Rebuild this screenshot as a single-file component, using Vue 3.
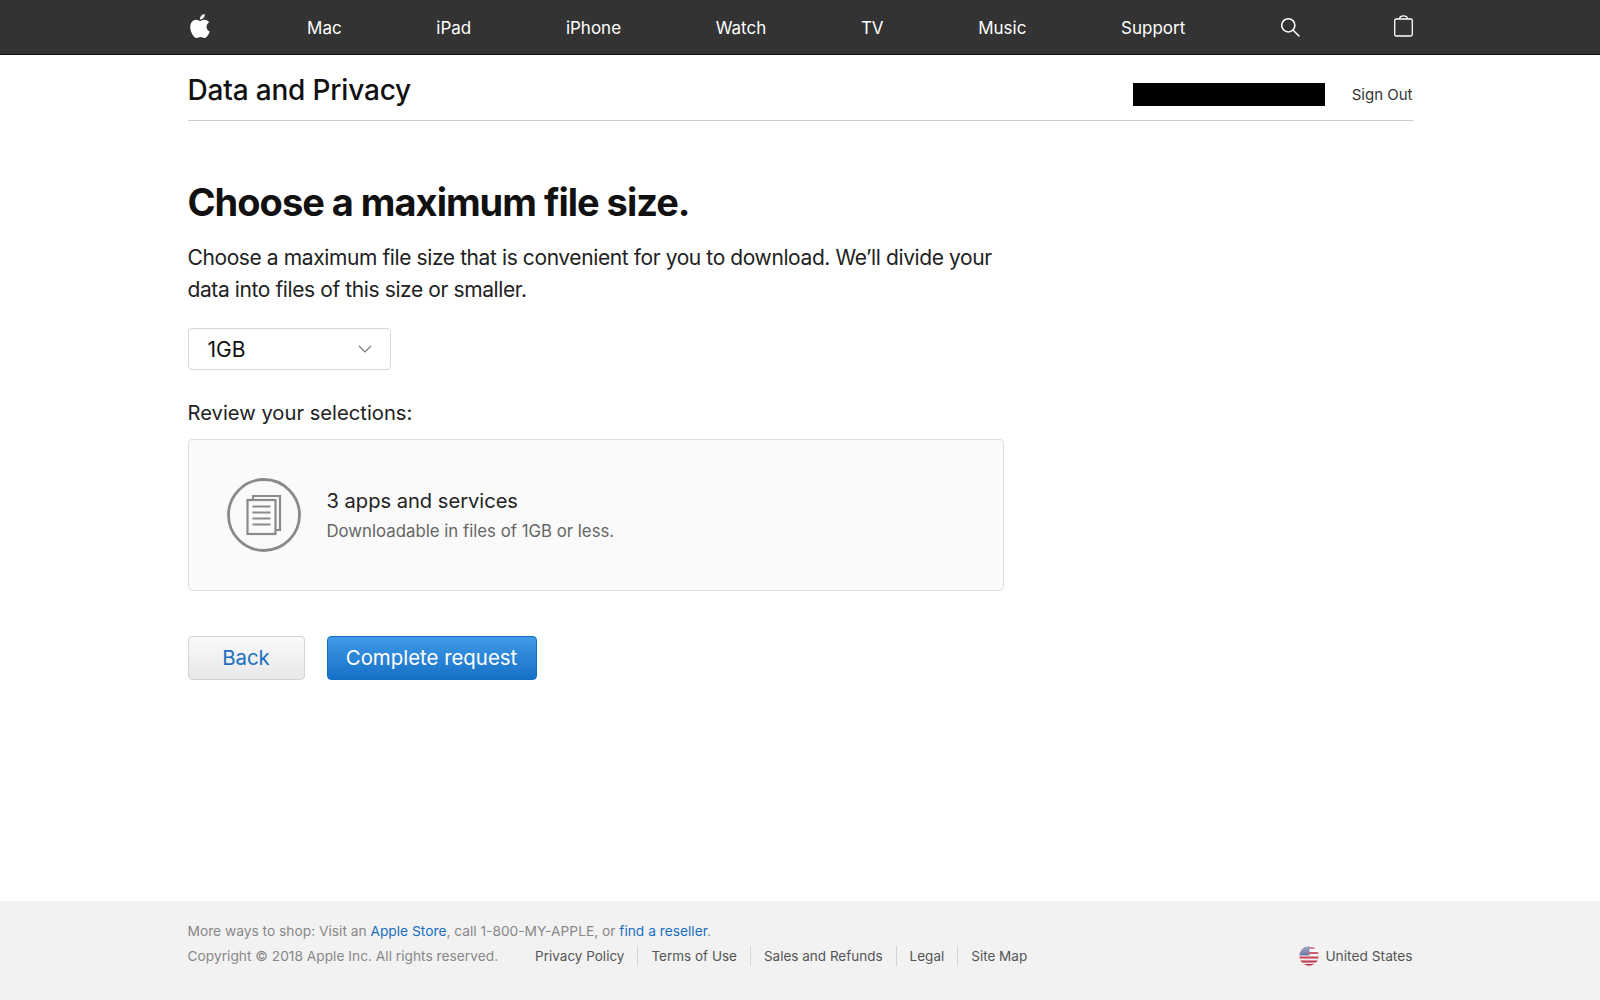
<script setup>
const navItems = ['Mac', 'iPad', 'iPhone', 'Watch', 'TV', 'Music', 'Support']
const legal = ['Privacy Policy', 'Terms of Use', 'Sales and Refunds', 'Legal', 'Site Map']
</script>

<template>
  <div class="page">
    <header class="nav">
      <nav class="nav-inner">
        <svg class="logo" viewBox="0 0 24 24" width="24" height="24" fill="#fff"><path d="M12.152 6.896c-.948 0-2.415-1.078-3.96-1.04-2.04.027-3.91 1.183-4.961 3.014-2.117 3.675-.546 9.103 1.519 12.09 1.013 1.454 2.208 3.09 3.792 3.039 1.52-.065 2.09-.987 3.935-.987 1.831 0 2.35.987 3.96.948 1.637-.026 2.676-1.48 3.676-2.948 1.156-1.688 1.636-3.325 1.662-3.415-.039-.013-3.182-1.221-3.22-4.857-.026-3.04 2.48-4.494 2.597-4.559-1.429-2.09-3.623-2.324-4.39-2.376-2-.156-3.675 1.09-4.61 1.09zM15.53 3.83c.843-1.012 1.4-2.427 1.245-3.83-1.207.052-2.662.805-3.532 1.818-.78.896-1.454 2.338-1.273 3.714 1.338.104 2.715-.688 3.559-1.701"/></svg>
        <a v-for="item in navItems" :key="item" class="nav-link">{{ item }}</a>
        <svg class="nav-icon" viewBox="0 0 20 20" width="20" height="20" fill="none" stroke="#fff" stroke-width="1.5"><circle cx="8.3" cy="8.3" r="6.6"/><path d="M13 13l6 6" stroke-linecap="round"/></svg>
        <svg class="nav-icon bag" viewBox="0 0 19 22" width="19" height="22" fill="none" stroke="#fff" stroke-width="1.3"><rect x="0.7" y="4" width="17.6" height="17" rx="1.5"/><path d="M5.5 4C5.500 1.500 6.500 .8 9.500 .8S13.500 1.500 13.500 4"/></svg>
      </nav>
    </header>

    <main class="main">
      <div class="subheader">
        <h2 class="subtitle">Data and Privacy</h2>
        <div class="account">
          <div class="redacted"></div>
          <a class="signout">Sign Out</a>
        </div>
      </div>

      <section class="content">
        <h1 class="heading">Choose a maximum file size.</h1>
        <p class="intro">Choose a maximum file size that is convenient for you to download. We’ll divide your data into files of this size or smaller.</p>

        <div class="select">
          <span>1GB</span>
          <svg viewBox="0 0 14 8" width="14" height="8" fill="none" stroke="#777" stroke-width="1.2"><path d="M1 1l6 6 6-6"/></svg>
        </div>

        <p class="review-label">Review your selections:</p>
        <div class="review">
          <svg class="doc-icon" viewBox="0 0 74 74" width="74" height="74" fill="none" stroke="#8a8a8a">
            <circle cx="37" cy="37" r="35.5" stroke-width="2.8"/>
            <path d="M26 22V18H53V52H48.500" stroke-width="2.200"/>
            <rect x="20.500" y="22" width="28" height="34" stroke-width="2.200"/>
            <path d="M25.500 28.500H43.500M25.500 34.500H43.500M25.500 40.500H43.500M25.500 46.500H43.500" stroke-width="2.200"/>
          </svg>
          <div class="review-text">
            <div class="review-title">3 apps and services</div>
            <div class="review-sub">Downloadable in files of 1GB or less.</div>
          </div>
        </div>

        <div class="actions">
          <button class="btn btn-back">Back</button>
          <button class="btn btn-primary">Complete request</button>
        </div>
      </section>
    </main>

    <footer class="footer">
      <div class="footer-inner">
        <p class="shop">More ways to shop: Visit an <a class="blue">Apple Store</a>, call 1-800-MY-APPLE, or <a class="blue">find a reseller</a>.</p>
        <div class="footer-row">
          <span class="copyright">Copyright © 2018 Apple Inc. All rights reserved.</span>
          <ul class="legal">
            <li v-for="l in legal" :key="l">{{ l }}</li>
          </ul>
          <div class="locale">
            <svg viewBox="0 0 20 20" width="20" height="20">
              <defs>
                <clipPath id="flagclip"><circle cx="10" cy="10" r="9.700"/></clipPath>
                <linearGradient id="flaggloss" x1="0" y1="0" x2="0" y2="1">
                  <stop offset="0" stop-color="#fff" stop-opacity=".45"/>
                  <stop offset=".5" stop-color="#fff" stop-opacity=".1"/>
                  <stop offset="1" stop-color="#000" stop-opacity=".08"/>
                </linearGradient>
              </defs>
              <g clip-path="url(#flagclip)">
                <rect width="20" height="20" fill="#f4f4f6"/>
                <path d="M0 2H20M0 7H20M0 11.500H20M0 15.500H20M0 19H20" stroke="#c8354a" stroke-width="1.800"/>
                <rect width="10.500" height="9.500" fill="#5a6598"/>
                <rect width="20" height="20" fill="url(#flaggloss)"/>
              </g>
            </svg>
            <span>United States</span>
          </div>
        </div>
      </div>
    </footer>
  </div>
</template>

<style>
html, body { margin: 0; background: #fff; }
</style>

<style scoped>
.page {
  height: 1000px;
  display: flex;
  flex-direction: column;
  font-family: Inter, "Liberation Sans", sans-serif;
  color: #111;
  overflow: hidden;
}
.nav {
  height: 54px;
  background: #333;
  border-bottom: 1px solid #111;
  flex: none;
}
.nav-inner {
  width: 1225px;
  margin: 0 auto;
  height: 54px;
  display: flex;
  align-items: center;
  justify-content: space-between;
}
.logo { margin: -3px 1px 0 0; }
.bag { margin: -2px -1px 0 0; }
.nav-link { color: #fff; font-size: 17px; padding-top: 2px; }
.main { flex: 1; width: 1225px; margin: 0 auto; }
.subheader {
  box-sizing: content-box;
  height: 61px;
  padding-top: 4px;
  display: flex;
  align-items: center;
  justify-content: space-between;
  border-bottom: 1px solid #ccc;
}
.subtitle { margin: 0; font-size: 28px; font-weight: 500; letter-spacing: -0.18px; }
.account { display: flex; align-items: center; gap: 27px; padding-top: 10px; }
.redacted { width: 192px; height: 23px; background: #000; }
.signout { font-size: 15px; color: #333; }
.content { width: 816px; padding-top: 56px; }
.heading { margin: 0; font-size: 38px; line-height: 50px; font-weight: 700; letter-spacing: -1px; }
.intro { margin: 15px 0 0; font-size: 21px; line-height: 32px; color: #222; letter-spacing: -0.4px; }
.select {
  box-sizing: border-box;
  margin-top: 22px;
  width: 203px;
  height: 42px;
  border: 1px solid #d6d6d6;
  border-radius: 4px;
  display: flex;
  align-items: center;
  justify-content: space-between;
  padding: 0 18px 0 19px;
  font-size: 21px;
}
.review-label { margin: 29px 0 0; font-size: 20.2px; line-height: 28px; color: #222; }
.review {
  box-sizing: border-box;
  margin-top: 12px;
  height: 152px;
  background: #fafafa;
  border: 1px solid #e0e0e0;
  border-radius: 4px;
  display: flex;
  align-items: center;
  padding-left: 38px;
  gap: 26px;
}
.review-text { padding-top: 2px; }
.review-title { font-size: 20.1px; line-height: 28px; color: #222; }
.review-sub { font-size: 16.8px; line-height: 28px; color: #666; margin-top: 2px; }
.actions { display: flex; gap: 22px; margin-top: 45px; }
.btn {
  box-sizing: border-box;
  height: 44px;
  border-radius: 4px;
  font: inherit;
  font-size: 20.4px;
  padding: 0 0 2px;
}
.btn-back {
  width: 117px;
  color: #1a6fc0;
  border: 1px solid #d4d4d4;
  background: linear-gradient(#fafafa, #e8e8e8);
}
.btn-primary {
  width: 210px;
  color: #fff;
  border: 1px solid #1470c4;
  background: linear-gradient(#409ae8, #1670c6);
}
.footer { flex: none; height: 99px; background: #f2f2f2; }
.footer-inner { width: 1225px; margin: 0 auto; padding-top: 20px; font-size: 13.75px; color: #888; }
.shop { margin: 0; line-height: 20px; }
.blue { color: #1a6fc0; }
.footer-row { display: flex; align-items: center; margin-top: 5px; height: 20px; }
.legal { list-style: none; margin: 0 0 0 37px; padding: 0; display: flex; color: #555; font-size: 13.5px; }
.legal li { padding: 0 13px; border-left: 1px solid #d6d6d6; line-height: 20px; }
.legal li:first-child { padding-left: 0; border-left: none; }
.locale { margin-left: auto; display: flex; align-items: center; gap: 6px; color: #555; }
</style>
